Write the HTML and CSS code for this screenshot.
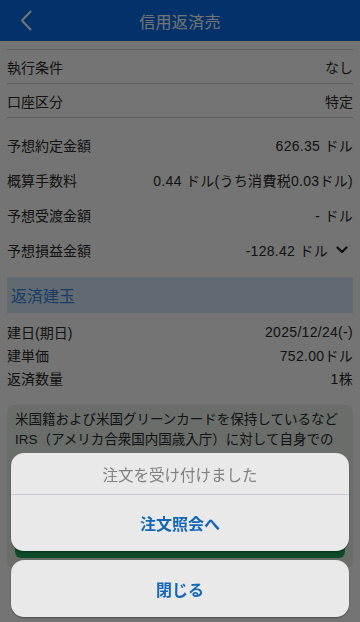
FILE: index.html
```html
<!DOCTYPE html>
<html lang="ja">
<head>
<meta charset="utf-8">
<meta name="viewport" content="width=device-width, initial-scale=1">
<title>信用返済売</title>
<link rel="stylesheet" href="styles.css">
</head>
<body>
<header class="appbar">
  <span class="back" aria-label="戻る">
    <svg width="12" height="21" viewBox="0 0 12 21"><polyline points="10.5,1.5 2,10.5 10.5,19.5" fill="none" stroke="#ffffff" stroke-width="2" stroke-linecap="round" stroke-linejoin="round"/></svg>
  </span>
  <h1 class="appbar-title">信用返済売</h1>
</header>

<main class="content">
  <div class="list list-bordered">
    <div class="row"><span>執行条件</span><span>なし</span></div>
    <div class="row"><span>口座区分</span><span>特定</span></div>
  </div>

  <div class="list list-calc">
    <div class="row"><span>予想約定金額</span><span class="val">626.35 ドル</span></div>
    <div class="row"><span>概算手数料</span><span class="val">0.44 ドル(うち消費税0.03ドル)</span></div>
    <div class="row"><span>予想受渡金額</span><span class="val">- ドル</span></div>
    <div class="row"><span>予想損益金額</span><span class="val val-toggle">-128.42 ドル<svg class="chev" width="12" height="8" viewBox="0 0 12 8"><polyline points="1.5,1.5 6,6 10.5,1.5" fill="none" stroke="#222" stroke-width="2.2" stroke-linecap="round" stroke-linejoin="round"/></svg></span></div>
  </div>

  <h2 class="section">返済建玉</h2>

  <div class="list list-compact">
    <div class="row"><span>建日(期日)</span><span class="val">2025/12/24(-)</span></div>
    <div class="row"><span>建単価</span><span class="val">752.00ドル</span></div>
    <div class="row"><span>返済数量</span><span class="val">1株</span></div>
  </div>

  <div class="notice">
    <p class="notice-text">米国籍および米国グリーンカードを保持しているなど<br>IRS（アメリカ合衆国内国歳入庁）に対して自身での</p>
    <div class="submit" role="button" aria-label="注文する"></div>
  </div>
</main>

<div class="overlay"></div>

<div class="sheet" role="dialog">
  <div class="sheet-group">
    <div class="sheet-title">注文を受け付けました</div>
    <button class="sheet-btn sheet-btn-first" type="button">注文照会へ</button>
  </div>
  <div class="sheet-group">
    <button class="sheet-btn sheet-btn-close" type="button">閉じる</button>
  </div>
</div>
</body>
</html>
```

FILE: styles.css
```css
* { box-sizing: border-box; }

html, body {
  margin: 0;
  padding: 0;
}

body {
  width: 360px;
  height: 622px;
  overflow: hidden;
  background: #ffffff;
  color: #2a2a2a;
  font-family: "Liberation Sans", "Noto Sans CJK JP", sans-serif;
  font-size: 14px;
}

.appbar {
  height: 41px;
  background: #066ee6;
  display: flex;
  align-items: center;
  justify-content: center;
  position: relative;
}

.back {
  position: absolute;
  left: 20px;
  top: 10px;
  display: block;
  line-height: 0;
}

.appbar-title {
  margin: 0;
  font-size: 16px;
  font-weight: normal;
  color: #ffffff;
  letter-spacing: 0.3px;
}

.content {
  padding: 0 7px;
}

.list { display: flex; flex-direction: column; }

.row {
  display: flex;
  justify-content: space-between;
  align-items: center;
}

.val { letter-spacing: 0.3px; }

.list-bordered {
  margin-top: 8px;
  border-top: 1px solid #cfcfcf;
}

.list-bordered .row {
  height: 34px;
  border-bottom: 1px solid #cfcfcf;
}

.list-calc {
  padding-top: 9px;
}

.list-calc .row {
  height: 35px;
}

.val-toggle {
  display: flex;
  align-items: center;
  gap: 8px;
  padding-right: 5px;
}

.chev { display: block; }

.section {
  margin: 10px 0 0;
  height: 36px;
  display: flex;
  align-items: center;
  padding: 0 4px;
  background: #d8e8f9;
  color: #3585e0;
  font-size: 16px;
  font-weight: normal;
}

.list-compact {
  margin-top: 7px;
}

.list-compact .row {
  height: 23px;
}

.notice {
  margin-top: 16px;
  background: #e6f2ea;
  border-radius: 7px;
  padding: 5px 8px 10px;
}

.notice-text {
  margin: 0;
  font-size: 13.5px;
  line-height: 20px;
  color: #2a2a2a;
}

.submit {
  height: 50px;
  margin-top: 58px;
  border-radius: 6px;
  background: #22a45c;
}

.overlay {
  position: fixed;
  inset: 0;
  background: rgba(0, 0, 0, 0.545);
}

.sheet {
  position: fixed;
  left: 11px;
  right: 11px;
  bottom: 5px;
  display: flex;
  flex-direction: column;
  gap: 9px;
}

.sheet-group {
  background: #e9e9e9;
  border-radius: 13px;
  overflow: hidden;
  box-shadow: 0 1px 1.5px rgba(0, 0, 0, 0.35);
}

.sheet-title {
  height: 42px;
  display: flex;
  align-items: center;
  justify-content: center;
  border-bottom: 1px solid #cdc9d1;
  color: #808080;
  font-size: 15.5px;
}

.sheet-btn {
  display: flex;
  align-items: center;
  justify-content: center;
  width: 100%;
  border: none;
  background: transparent;
  color: #1466b8;
  font-family: inherit;
  font-size: 16px;
  font-weight: 600;
  padding: 0;
}

.sheet-btn-first { height: 56px; }
.sheet-btn-close { height: 57px; }
```
